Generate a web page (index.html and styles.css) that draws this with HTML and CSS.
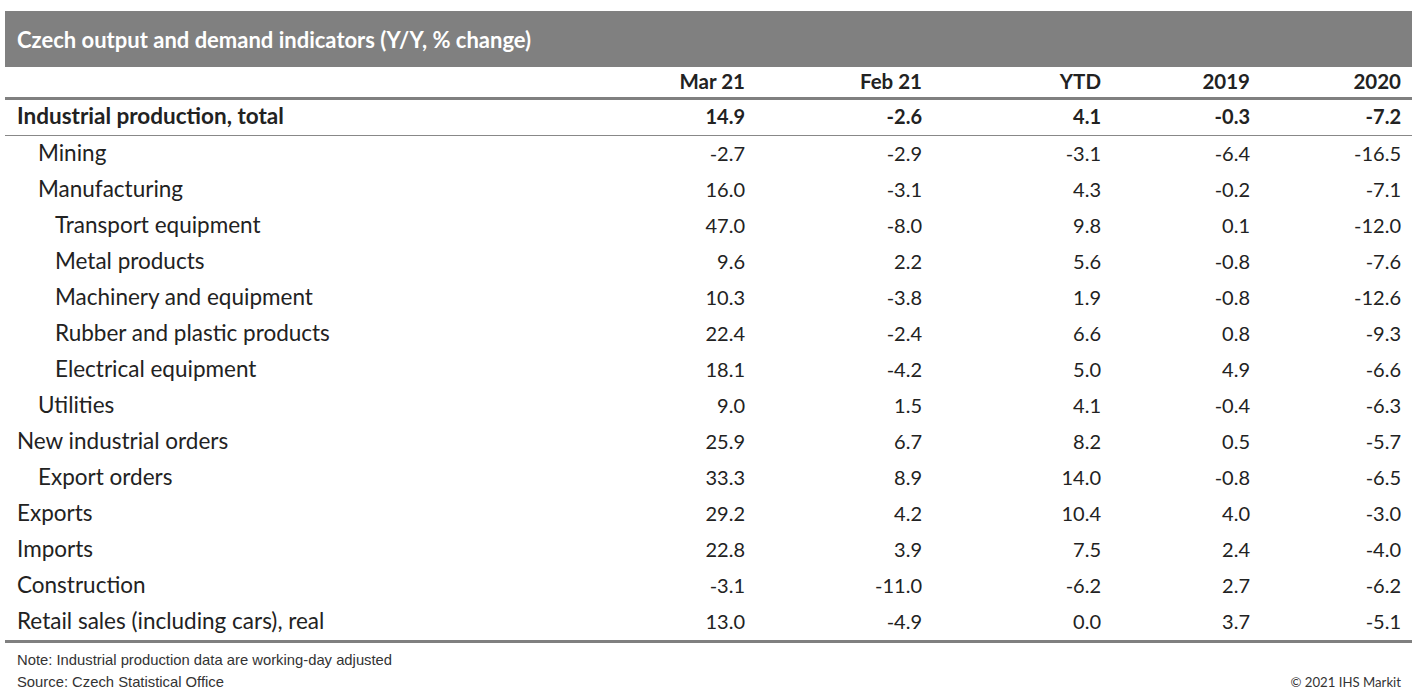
FILE: index.html
```html
<!DOCTYPE html>
<html>
<head>
<meta charset="utf-8">
<link rel="stylesheet" href="styles.css">
</head>
<body>
<div class="panel">
  <div class="title">Czech output and demand indicators (Y/Y, % change)</div>
  <div class="row head">
    <div class="label"></div><div>Mar 21</div><div>Feb 21</div><div>YTD</div><div>2019</div><div>2020</div>
  </div>
  <div class="row total">
    <div class="label">Industrial production, total</div><div>14.9</div><div>-2.6</div><div>4.1</div><div>-0.3</div><div>-7.2</div>
  </div>
  <div class="row"><div class="label l1">Mining</div><div>-2.7</div><div>-2.9</div><div>-3.1</div><div>-6.4</div><div>-16.5</div></div>
  <div class="row"><div class="label l1">Manufacturing</div><div>16.0</div><div>-3.1</div><div>4.3</div><div>-0.2</div><div>-7.1</div></div>
  <div class="row"><div class="label l2">Transport equipment</div><div>47.0</div><div>-8.0</div><div>9.8</div><div>0.1</div><div>-12.0</div></div>
  <div class="row"><div class="label l2">Metal products</div><div>9.6</div><div>2.2</div><div>5.6</div><div>-0.8</div><div>-7.6</div></div>
  <div class="row"><div class="label l2">Machinery and equipment</div><div>10.3</div><div>-3.8</div><div>1.9</div><div>-0.8</div><div>-12.6</div></div>
  <div class="row"><div class="label l2">Rubber and plastic products</div><div>22.4</div><div>-2.4</div><div>6.6</div><div>0.8</div><div>-9.3</div></div>
  <div class="row"><div class="label l2">Electrical equipment</div><div>18.1</div><div>-4.2</div><div>5.0</div><div>4.9</div><div>-6.6</div></div>
  <div class="row"><div class="label l1">Utilities</div><div>9.0</div><div>1.5</div><div>4.1</div><div>-0.4</div><div>-6.3</div></div>
  <div class="row"><div class="label">New industrial orders</div><div>25.9</div><div>6.7</div><div>8.2</div><div>0.5</div><div>-5.7</div></div>
  <div class="row"><div class="label l1">Export orders</div><div>33.3</div><div>8.9</div><div>14.0</div><div>-0.8</div><div>-6.5</div></div>
  <div class="row"><div class="label">Exports</div><div>29.2</div><div>4.2</div><div>10.4</div><div>4.0</div><div>-3.0</div></div>
  <div class="row"><div class="label">Imports</div><div>22.8</div><div>3.9</div><div>7.5</div><div>2.4</div><div>-4.0</div></div>
  <div class="row"><div class="label">Construction</div><div>-3.1</div><div>-11.0</div><div>-6.2</div><div>2.7</div><div>-6.2</div></div>
  <div class="row last"><div class="label">Retail sales (including cars), real</div><div>13.0</div><div>-4.9</div><div>0.0</div><div>3.7</div><div>-5.1</div></div>
  <div class="footer">
    <div class="notes">
      <div>Note: Industrial production data are working-day adjusted</div>
      <div>Source: Czech Statistical Office</div>
    </div>
    <div class="copy">© 2021 IHS Markit</div>
  </div>
</div>
</body>
</html>
```

FILE: styles.css
```css
html, body {
  margin: 0;
  padding: 0;
  background: #ffffff;
}
body {
  padding: 11px 5px 0 5px;
  font-family: Lato, "Open Sans", sans-serif;
  color: #222222;
}
.panel {
  width: 1407px;
}
.title {
  background: #808080;
  color: #ffffff;
  font-weight: 700;
  font-size: 22px;
  height: 56px;
  line-height: 58px;
  padding-left: 12px;
}
.row {
  display: grid;
  grid-template-columns: 563px 177px 177px 179px 149px 151px;
  padding-right: 11px;
  height: 36px;
  align-items: center;
  font-size: 20px;
  text-align: right;
}
.row > div {
  line-height: 1;
  padding-bottom: 3px;
}
.row > .label {
  text-align: left;
  padding-left: 12px;
  padding-bottom: 1px;
  white-space: nowrap;
  font-size: 22.5px;
}
.row > .l1 { padding-left: 33px; }
.row > .l2 { padding-left: 50px; }
.head {
  height: 30px;
  border-bottom: 3px solid #808080;
  font-weight: 700;
  font-size: 20.5px;
}
.head > div { padding-bottom: 1px; }
.total {
  height: 35px;
  border-bottom: 1px solid #888888;
  font-weight: 700;
}
.total > div { padding-bottom: 4px; }
.total > .label { padding-bottom: 2px; }
.last {
  border-bottom: 3px solid #808080;
}
.footer {
  display: flex;
  justify-content: space-between;
  align-items: flex-end;
  padding: 6px 11px 0 12px;
}
.notes {
  font-family: "Liberation Sans", Arial, sans-serif;
  font-size: 14.8px;
  color: #333333;
  line-height: 22px;
}
.copy {
  font-size: 13.2px;
  color: #333333;
  line-height: 20px;
  padding-bottom: 1px;
}
```
